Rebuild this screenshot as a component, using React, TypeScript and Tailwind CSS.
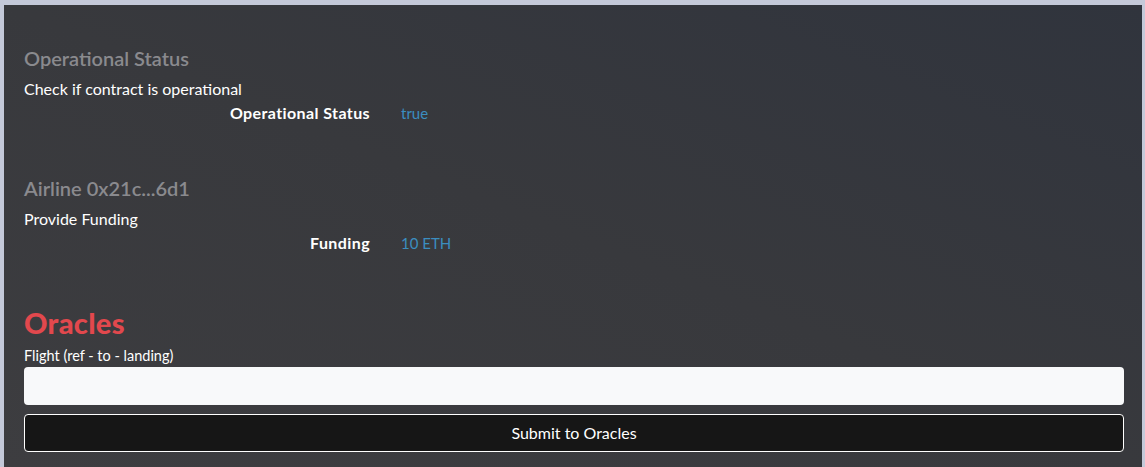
import React from 'react';

const Row: React.FC<{ label: string; value: string }> = ({ label, value }) => (
  <div className="flex h-6 items-center">
    <div className="w-[346px] text-right text-[16px] font-bold tracking-[0.4px] text-white">{label}</div>
    <div className="ml-[31px] text-[15px] text-[#3b8ec0]">{value}</div>
  </div>
);

export default function App() {
  return (
    <div className="h-[467px] w-[1145px] bg-[#c4c9d9] pl-[4px] pr-[3px] pt-[5px] font-['Lato',sans-serif]">
      <div className="h-full bg-gradient-to-bl from-[#30343d] via-[#38393d] to-[#3d3d40] pl-[20px] pr-[18px] pt-[39px]">
        <h2 className="h-7 text-[20px] font-semibold leading-7 text-[#8a8a8e]">Operational Status</h2>
        <p className="mt-[5px] h-6 text-[16px] leading-6 text-white">Check if contract is operational</p>
        <Row label="Operational Status" value="true" />

        <h2 className="mt-[49px] h-7 text-[20px] font-semibold leading-7 text-[#8a8a8e]">Airline 0x21c...6d1</h2>
        <p className="mt-[5px] h-6 text-[16px] leading-6 text-white">Provide Funding</p>
        <Row label="Funding" value="10 ETH" />

        <h1 className="mt-[50px] h-9 text-[29px] font-black leading-9 tracking-[0.3px] text-[#e2484d]">Oracles</h1>
        <label className="mt-[6px] block h-[18px] text-[14.5px] leading-[18px] text-white">Flight (ref - to - landing)</label>
        <input type="text" className="mt-[2px] block h-[38px] w-full rounded-[4px] bg-[#f8f9fa] px-3 outline-none" />
        <button className="mt-[9px] block h-[38px] w-full rounded-[4px] border border-white bg-[#161616] text-[16px] text-white">
          Submit to Oracles
        </button>
      </div>
    </div>
  );
}
